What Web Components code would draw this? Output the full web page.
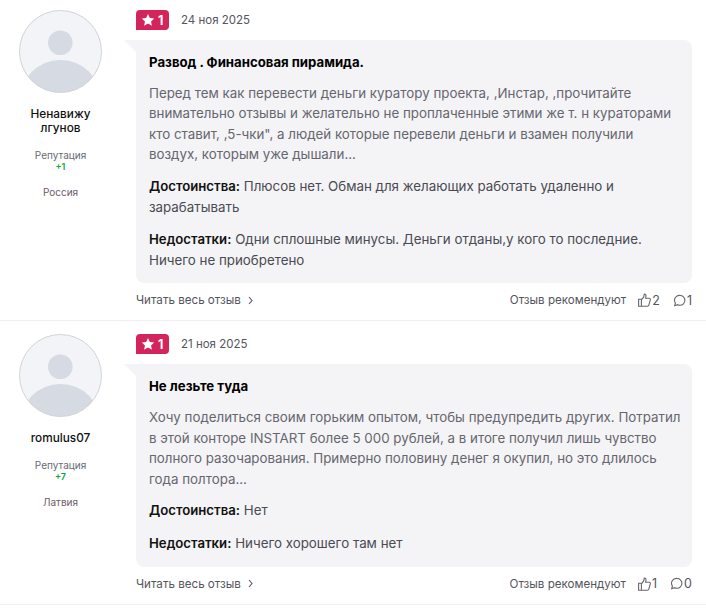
<!DOCTYPE html>
<html lang="ru">
<head>
<meta charset="utf-8">
<style>
  html, body { margin: 0; background: #fff; }
  body { font-family: Inter, "Noto Sans", sans-serif; color: #4a4a52; }
</style>
</head>
<body>
<review-item name="Ненавижу лгунов" rep="+1" country="Россия" date="24 ноя 2025" likes="2" comments="1" style="--top: 10px">
  <span slot="title">Развод . Финансовая пирамида.</span>
  Перед тем как перевести деньги куратору проекта, ,Инстар, ,прочитайте внимательно отзывы и желательно не проплаченные этими же т. н кураторами кто ставит, ,5-чки", а людей которые перевели деньги и взамен получили воздух, которым уже дышали...
  <span slot="pros">Плюсов нет. Обман для желающих работать удаленно и зарабатывать</span>
  <span slot="cons">Одни сплошные минусы. Деньги отданы,у кого то последние. Ничего не приобретено</span>
</review-item>
<review-item name="romulus07" rep="+7" country="Латвия" date="21 ноя 2025" likes="1" comments="0" style="--top: 13px">
  <span slot="title">Не лезьте туда</span>
  Хочу поделиться своим горьким опытом, чтобы предупредить других. Потратил в этой конторе INSTART более 5 000 рублей, а в итоге получил лишь чувство полного разочарования. Примерно половину денег я окупил, но это длилось года полтора...
  <span slot="pros">Нет</span>
  <span slot="cons">Ничего хорошего там нет</span>
</review-item>

<script>
// Колонка с аватаром и данными автора
class ReviewAuthor extends HTMLElement {
  constructor() {
    super();
    this.attachShadow({ mode: 'open' });
  }

  connectedCallback() {
    this.shadowRoot.innerHTML = `
      <style>
        :host { display: flex; flex-direction: column; align-items: center; width: 121px; flex: none; text-align: center; }
        svg { display: block; }
        .name { margin-top: 14px; font-size: 11.8px; line-height: 14px; color: #111; width: 90px; font-weight: 500; overflow-wrap: anywhere; }
        .rep { margin-top: 14px; font-size: 10px; line-height: 12px; color: #666b73; }
        .val { font-size: 9px; line-height: 11px; color: #0aa83c; font-weight: 600; }
        .country { margin-top: 14px; font-size: 10px; line-height: 12px; color: #6d5a6c; }
      </style>
      <svg width="83" height="83" viewBox="0 0 83 83">
        <defs><clipPath id="c"><circle cx="41.5" cy="41.5" r="41"/></clipPath></defs>
        <circle cx="41.5" cy="41.5" r="41" fill="#f3f4f7"/>
        <circle cx="41.3" cy="32.7" r="12.3" fill="#d6dae3"/>
        <circle cx="41.5" cy="90.5" r="40.5" fill="#d6dae3" clip-path="url(#c)"/>
        <circle cx="41.5" cy="41.5" r="41" fill="none" stroke="#d2d3d7" stroke-width="1"/>
      </svg>
      <div class="name">${this.getAttribute('name')}</div>
      <div class="rep">Репутация</div>
      <div class="val">${this.getAttribute('rep')}</div>
      <div class="country">${this.getAttribute('country')}</div>
    `;
  }
}

// Отзыв целиком: автор, оценка, текст и нижняя строка
class ReviewItem extends HTMLElement {
  constructor() {
    super();
    this.attachShadow({ mode: 'open' });
  }

  connectedCallback() {
    const attr = n => this.getAttribute(n);
    this.shadowRoot.innerHTML = `
      <style>
        :host { display: flex; padding: var(--top) 14px 10px 0; border-bottom: 1px solid #f0f0f2; }
        review-author { margin-right: 15px; }
        .main { flex: 1; min-width: 0; }
        .head { display: flex; align-items: center; gap: 12px; height: 20px; }
        .badge { display: flex; align-items: center; gap: 3px; width: 33px; height: 20px; box-sizing: border-box; padding-left: 5px; border-radius: 4px 4px 4px 0; background: #d3255b; color: #fff; font-size: 12.5px; font-weight: 700; }
        .date { font-size: 11.5px; color: #55555d; }
        .panel { position: relative; margin-top: 10px; padding: 12px 10px 13px 13px; background: #f4f4f6; border-radius: 0 8px 8px 8px; font-size: 13.33px; line-height: 20.6px; color: #66666e; }
        .panel::before { content: ""; position: absolute; left: -12px; top: 0; border-top: 12px solid #f4f4f6; border-left: 12px solid transparent; }
        .title { font-weight: 700; color: #000; font-size: 13.2px; margin-bottom: 10px; }
        .sec { margin-top: 12px; color: #4a4a52; }
        .pros { margin-top: 11px; }
        b { font-weight: 600; color: #111; font-size: 13.2px; }
        .foot { display: flex; align-items: center; height: 20px; margin-top: 7px; font-size: 11.6px; color: #55555d; }
        .more { display: flex; align-items: center; gap: 6px; }
        .rec { margin-left: auto; margin-right: 12px; }
        .stat { display: flex; align-items: center; gap: 1px; font-size: 12.5px; }
        .stat + .stat { margin-left: 13px; }
      </style>
      <review-author name="${attr('name')}" rep="${attr('rep')}" country="${attr('country')}"></review-author>
      <div class="main">
        <div class="head">
          <div class="badge">
            <svg width="14" height="14" viewBox="0 0 24 24"><path fill="#fff" d="M12 1.500l3.200 6.900 7.500.9-5.500 5.100 1.500 7.400L12 18.100l-6.700 3.700 1.500-7.400L1.300 9.300l7.500-.9z"/></svg>
            <span>1</span>
          </div>
          <span class="date">${attr('date')}</span>
        </div>
        <div class="panel">
          <div class="title"><slot name="title"></slot></div>
          <div><slot></slot></div>
          <div class="sec pros"><b>Достоинства:</b> <slot name="pros"></slot></div>
          <div class="sec"><b>Недостатки:</b> <slot name="cons"></slot></div>
        </div>
        <div class="foot">
          <span class="more">Читать весь отзыв
            <svg width="7" height="9" viewBox="0 0 7 9"><path d="M2 1l3 3.500L2 8" fill="none" stroke="#55555d" stroke-width="1.100"/></svg>
          </span>
          <span class="rec">Отзыв рекомендуют</span>
          <span class="stat">
            <svg width="13" height="14" viewBox="0 0 13 14" fill="none" stroke="#66666e" stroke-width="1.100"><path d="M.6 6.200h2.800v7H.6zM3.400 6.800l2.300-2.900L6.300 1c1.200 0 1.800.9 1.700 2L7.600 5.200h3.500c1 0 1.500.8 1.200 1.700l-1.400 5c-.2.800-.7 1.300-1.500 1.300H3.400"/></svg>
            ${attr('likes')}
          </span>
          <span class="stat">
            <svg width="13" height="13" viewBox="0 0 14 14" fill="none" stroke="#66666e" stroke-width="1.200"><path d="M7.500 1.500a5.300 5.300 0 0 1 0 10.600c-1 0-1.800-.2-2.600-.6L1.800 12.600l.8-2.800A5.300 5.300 0 0 1 7.500 1.500z"/></svg>
            ${attr('comments')}
          </span>
        </div>
      </div>
    `;
  }
}

customElements.define('review-author', ReviewAuthor);
customElements.define('review-item', ReviewItem);
</script>
</body>
</html>
